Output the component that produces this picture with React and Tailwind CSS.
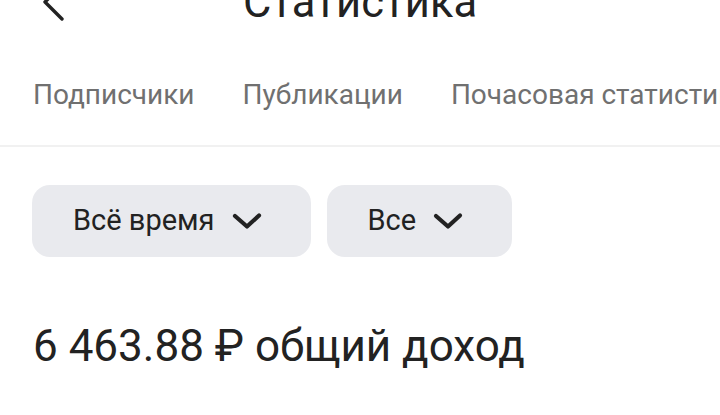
import React from 'react';

const tabs = ['Подписчики', 'Публикации', 'Почасовая статистика'];
const filters = ['Всё время', 'Все'];

function ChevronDown() {
  return (
    <svg width="30" height="18" viewBox="0 0 30 18" fill="none" className="shrink-0">
      <path d="M3 4 L15 14.5 L27 3.5" stroke="#222222" strokeWidth="4.2" strokeLinecap="round" strokeLinejoin="round" />
    </svg>
  );
}

export default function App() {
  return (
    <div className="w-[720px] h-[415px] overflow-hidden bg-white text-[#222222]" style={{ fontFamily: 'Roboto, "Noto Sans", sans-serif' }}>
      {/* header */}
      <div className="grid grid-cols-[120px_1fr_120px] items-center h-[44px] -mt-[19px]">
        <div className="pl-[41px] flex items-center">
          <svg width="26" height="40" viewBox="0 0 26 40" fill="none">
            <path d="M21 2 L4 19 L21 36" stroke="#222222" strokeWidth="3.4" strokeLinecap="round" strokeLinejoin="round" />
          </svg>
        </div>
        <h1 className="text-center text-[43.5px] leading-none font-normal">Статистика</h1>
        <div />
      </div>

      {/* tabs */}
      <div className="flex gap-[48px] pl-[33px] pt-[53px] pb-[33px] whitespace-nowrap text-[28px] leading-[34px] text-[#707070]">
        {tabs.map(t => (
          <span key={t}>{t}</span>
        ))}
      </div>
      <div className="h-[2px] bg-[#f1f1f1]" />

      {/* filters */}
      <div className="flex gap-[16px] px-[32px] pt-[38px]">
        {filters.map(f => (
          <button key={f} className="flex items-center gap-[17px] h-[72px] pl-[41px] pr-[49px] rounded-[18px] bg-[#e9eaee] text-[29px] text-[#222222]">
            <span>{f}</span>
            <ChevronDown />
          </button>
        ))}
      </div>

      {/* total */}
      <div className="pl-[33px] pt-[63px] text-[44px] leading-[52px] text-[#222222] whitespace-nowrap">
        6 463.88 ₽ общий доход
      </div>
    </div>
  );
}
